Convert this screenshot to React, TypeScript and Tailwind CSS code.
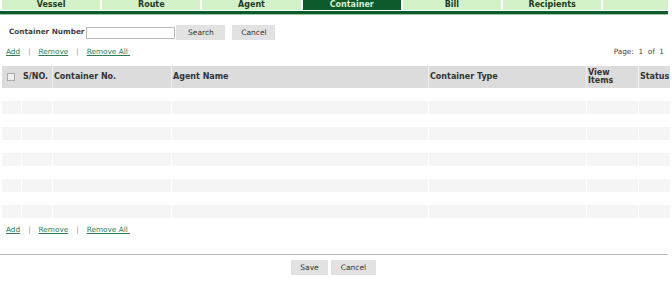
import React from 'react';

const tabs = ['Vessel', 'Route', 'Agent', 'Container', 'Bill', 'Recipients', ''];

const LinkBar = () => (
  <div className="flex items-center gap-[8px] text-[7.3px] text-[#2e7d4f]">
    <span className="underline">Add</span>
    <span className="text-[#999]">|</span>
    <span className="underline">Remove</span>
    <span className="text-[#999]">|</span>
    <span className="underline">Remove All&nbsp;</span>
  </div>
);

export default function App() {
  const rows = Array.from({ length: 10 }, (_, i) => i);
  return (
    <div
      className="w-[672px] h-[282px] bg-white text-[#333] overflow-hidden"
      style={{ fontFamily: 'Verdana, "DejaVu Sans", sans-serif' }}
    >
      {/* Tabs */}
      <div className="w-[668px]">
        <div className="flex gap-[2px] h-[10px] pl-[2px]">
          {tabs.map((t) => (
            <div
              key={t || 'empty'}
              className={`flex-1 flex items-center justify-center text-[8px] font-bold leading-none ${
                t === 'Container' ? 'bg-[#0f5a2c] text-[#d8f0d0]' : 'bg-[#d4f2c8] text-[#1e3a24]'
              } ${t === '' ? 'flex-[0.66]' : ''}`}
            >
              {t}
            </div>
          ))}
        </div>
        <div className="mt-[1px] h-[4px] bg-[#0f5a2c] border-b border-[#9cc7a8]" />
      </div>

      {/* Search */}
      <div className="flex items-center pl-[9px] mt-[10px] h-[15px]">
        <span className="text-[7.3px] font-bold text-[#444] mr-[2px]">Container Number</span>
        <input className="w-[89px] h-[12px] border border-[#bbb] bg-white" />
        <button className="w-[49px] h-[15px] bg-[#e2e2e2] text-[7.5px] text-[#333] ml-[1px]">Search</button>
        <button className="w-[43px] h-[15px] bg-[#e2e2e2] text-[7.5px] text-[#333] ml-[7px]">Cancel</button>
      </div>

      {/* Links + pager */}
      <div className="flex items-center justify-between pl-[6px] pr-[8px] mt-[5px] h-[14px]">
        <LinkBar />
        <span className="text-[7.3px] text-[#444]">Page:&nbsp; 1 &nbsp;of&nbsp; 1</span>
      </div>

      {/* Table */}
      <div className="mt-[7px] pl-[2px] w-[670px]">
        <div className="flex h-[22px] bg-[#dcdcdc] text-[8px] font-bold text-[#333] leading-[8px] gap-[1px]">
          <div className="w-[18px] flex items-center justify-center bg-[#dcdcdc]">
            <span className="w-[8px] h-[8px] border border-[#aaa] bg-[#eee]" />
          </div>
          <div className="w-[30px] flex items-center pl-[2px]">S/NO.</div>
          <div className="w-[118px] flex items-center border-l border-[#f0f0f0] pl-[1px]">Container No.</div>
          <div className="w-[256px] flex items-center border-l border-[#f0f0f0] pl-[1px]">Agent Name</div>
          <div className="w-[157px] flex items-center border-l border-[#f0f0f0] pl-[1px]">Container Type</div>
          <div className="w-[51px] flex items-center border-l border-[#f0f0f0] pl-[1px]">View<br />Items</div>
          <div className="w-[30px] flex items-center border-l border-[#f0f0f0] pl-[1px]">Status</div>
        </div>
        {rows.map((r) => (
          <div key={r} className={`flex h-[13px] gap-[1px] ${r % 2 ? 'bg-[#f5f5f5]' : 'bg-white'}`}>
            <div className="w-[18px]" />
            <div className="w-[30px] border-l border-white" />
            <div className="w-[118px] border-l border-white" />
            <div className="w-[256px] border-l border-white" />
            <div className="w-[157px] border-l border-white" />
            <div className="w-[51px] border-l border-white" />
            <div className="w-[30px] border-l border-white" />
          </div>
        ))}
      </div>

      <div className="pl-[6px] mt-[5px] h-[14px] flex items-center">
        <LinkBar />
      </div>

      <div className="mt-[17px] border-t border-[#bbb] w-[668px]" />

      <div className="flex justify-center gap-[3px] mt-[5px] pr-[5px]">
        <button className="w-[37px] h-[15px] bg-[#e2e2e2] text-[7.5px] text-[#333]">Save</button>
        <button className="w-[45px] h-[15px] bg-[#e2e2e2] text-[7.5px] text-[#333]">Cancel</button>
      </div>
    </div>
  );
}
